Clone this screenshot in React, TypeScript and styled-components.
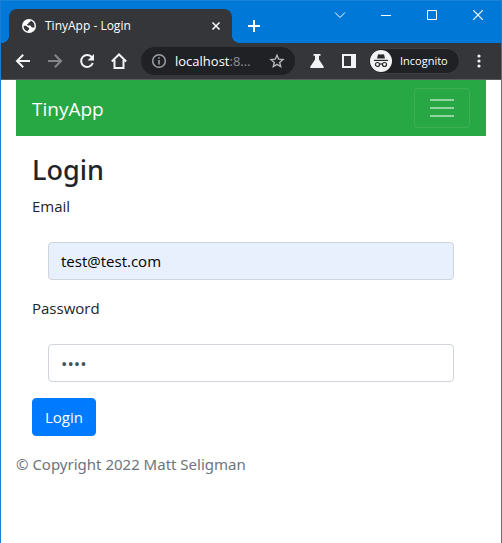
import React from "react";
import styled, { createGlobalStyle } from "styled-components";

const GlobalStyle = createGlobalStyle`
  *, *::before, *::after { box-sizing: border-box; }
  html, body, #root { height: 100%; }
  body {
    margin: 0;
    background: #fff;
    color: #212529;
    font: 15px/24px "Open Sans", "Noto Sans", sans-serif;
  }
  button, input { font: inherit; margin: 0; }
`;

const Window = styled.div`
  display: flex;
  flex-direction: column;
  min-height: 100%;
  border: solid #1a7fd4;
  border-width: 0 1px;
`;

const TabStrip = styled.header`
  display: flex;
  height: 43px;
  padding-left: 8px;
  background: #0078d7;
  border-top: 1px solid #1a83d8;
`;

const Tab = styled.div`
  position: relative;
  flex: 0 1 223px;
  display: flex;
  align-items: center;
  gap: 9px;
  margin-top: 8px;
  padding: 0 10px 0 13px;
  border-radius: 8px 8px 0 0;
  background: #35363a;
  color: #fff;
  font-size: 12px;
  line-height: 16px;

  &::before, &::after {
    content: "";
    position: absolute;
    bottom: 0;
    width: 8px;
    height: 8px;
  }
  &::before {
    right: 100%;
    background: radial-gradient(circle at 0 0, transparent 8px, #35363a 8px);
  }
  &::after {
    left: 100%;
    background: radial-gradient(circle at 100% 0, transparent 8px, #35363a 8px);
  }
`;

const TabTitle = styled.span`
  flex: 1;
  white-space: nowrap;
`;

const IconButton = styled.button<{ $width?: number; $color?: string }>`
  display: flex;
  flex: none;
  align-items: center;
  justify-content: center;
  width: ${(p) => p.$width ?? 32}px;
  height: 28px;
  padding: 0;
  border: 0;
  background: none;
  color: ${(p) => p.$color ?? "#f1f3f4"};
`;

const NewTab = styled(IconButton)`
  margin: 11px 0 0 8px;
`;

const WindowControls = styled.div`
  display: flex;
  margin-left: auto;
`;

const Toolbar = styled.div`
  display: flex;
  align-items: center;
  height: 37px;
  padding: 0 3px 0 6px;
  background: #35363a;
  border-bottom: 1px solid #5a5b5f;
  color: #f1f3f4;
  font-size: 12px;
  line-height: 16px;
`;

const AddressBar = styled.div`
  flex: 1;
  display: flex;
  align-items: center;
  gap: 8px;
  height: 28px;
  margin: 0 6px;
  padding: 0 2px 0 10px;
  border-radius: 14px;
  background: #202124;
  color: #9aa0a6;
`;

const Address = styled.span`
  flex: 1;
  color: #8d9196;
  font-size: 13px;
  white-space: nowrap;

  b { color: #fff; font-weight: 500; }
`;

const Incognito = styled.button`
  display: flex;
  flex: none;
  align-items: center;
  gap: 8px;
  width: 92px;
  height: 26px;
  margin-left: 3px;
  padding: 0 0 0 1px;
  border: 1px solid #3c3e42;
  border-radius: 13px;
  background: #202124;
  color: #fff;
  font-size: 11px;
  font-weight: 500;
`;

const Page = styled.div`
  flex: 1;
  padding: 0 15px;
  background: #fff;
`;

const Navbar = styled.nav`
  display: flex;
  align-items: center;
  justify-content: space-between;
  padding: 8px 16px;
  background: #28a745;
`;

const Brand = styled.a`
  padding-top: 2px;
  color: #fff;
  font-size: 19px;
  line-height: 30px;
  text-decoration: none;
`;

const Toggler = styled.button`
  display: flex;
  padding: 4px 12px;
  border: 1px solid rgba(255, 255, 255, 0.1);
  border-radius: 4px;
  background: none;
  color: rgba(255, 255, 255, 0.5);
`;

const Form = styled.form`
  padding: 16px;
`;

const Title = styled.h1`
  margin: 0 0 6px;
  font-family: "Noto Sans", sans-serif;
  font-size: 27px;
  font-weight: 500;
  line-height: 36px;
`;

const Field = styled.div`
  margin-bottom: 16px;
`;

const Label = styled.label`
  display: block;
  margin-bottom: 8px;
`;

const InputWrap = styled.div`
  padding: 16px 16px 0;
`;

const Input = styled.input<{ $filled?: boolean }>`
  display: block;
  width: 100%;
  height: 38px;
  padding: 6px 12px;
  border: 1px solid #ced4da;
  border-radius: 4px;
  background: ${(p) => (p.$filled ? "#e8f0fe" : "#fff")};
  color: ${(p) => (p.$filled ? "#000" : "#495057")};

  &[type="password"] { font-size: 17px; }
`;

const Submit = styled.button`
  display: block;
  height: 38px;
  padding: 0 12px;
  border: 1px solid #007bff;
  border-radius: 4px;
  background: #007bff;
  color: #fff;
`;

const Footer = styled.footer`
  color: #6c757d;
  font-family: "Noto Sans", sans-serif;
`;

const Svg = ({ size, box = size, children }: { size: number; box?: number; children: React.ReactNode }) => (
  <svg width={size} height={size} viewBox={`0 0 ${box} ${box}`} fill="none" stroke="currentColor" strokeWidth="2" aria-hidden="true">
    {children}
  </svg>
);

export default function App() {
  return (
    <Window>
      <GlobalStyle />
      <TabStrip>
        <Tab>
          <Svg size={14}>
            <circle cx="7" cy="7" r="7" fill="currentColor" stroke="none" />
            <path d="M8.500 1.500C8.800 3 7.500 3.200 6.600 3.600 7 5 5 4.800 5 5.800c0 1 2.200.5 3.200.8 1.100.4.7 1.900 2.300 1.900h1.900C13 5 11.400 2.400 8.500 1.500zM1.600 6.700C1.500 9.800 3.200 11.900 5.800 12.400c0-1 .3-1.400 1-1.700C7.600 10.200 7.200 8.500 6 8.300 5 8.100 4.800 6.900 3.800 6.700z" fill="#35363a" stroke="none" />
          </Svg>
          <TabTitle>TinyApp - Login</TabTitle>
          <IconButton $width={12} aria-label="Close tab">
            <Svg size={10}><path d="M1.500 1.500l7 7M8.500 1.500l-7 7" strokeWidth="1.700" /></Svg>
          </IconButton>
        </Tab>
        <NewTab $width={28} $color="#fff" aria-label="New tab">
          <Svg size={12}><path d="M6 0v12M0 6h12" /></Svg>
        </NewTab>
        <WindowControls>
          <IconButton $width={46} $color="#fff" aria-label="Search tabs">
            <Svg size={12}><path d="M1 3.500l5 5 5-5" strokeWidth="1" /></Svg>
          </IconButton>
          <IconButton $width={46} $color="#fff" aria-label="Minimize">
            <Svg size={10}><path d="M0 5.500h10" strokeWidth="1" /></Svg>
          </IconButton>
          <IconButton $width={46} $color="#fff" aria-label="Maximize">
            <Svg size={10}><path d="M.5.5h9v9h-9z" strokeWidth="1" /></Svg>
          </IconButton>
          <IconButton $width={46} $color="#fff" aria-label="Close window">
            <Svg size={10}><path d="M0 0l10 10M10 0L0 10" strokeWidth="1.200" /></Svg>
          </IconButton>
        </WindowControls>
      </TabStrip>

      <Toolbar>
        <IconButton aria-label="Back">
          <Svg size={16}><path d="M15 8H2.500M8.200 1.800L2 8l6.200 6.200" /></Svg>
        </IconButton>
        <IconButton $color="#85868a" aria-label="Forward">
          <Svg size={16}><path d="M1 8h12.500M7.800 1.800L14 8l-6.200 6.200" /></Svg>
        </IconButton>
        <IconButton aria-label="Reload">
          <Svg size={16}>
            <path d="M13 4.400A6 6 0 1 0 13.800 10" />
            <path d="M15 1v6.500H8.500z" fill="currentColor" stroke="none" />
          </Svg>
        </IconButton>
        <IconButton aria-label="Home">
          <Svg size={16}><path d="M.8 8.500L8 1.500l7.200 7M3.500 7v8h9V7" /></Svg>
        </IconButton>
        <AddressBar>
          <Svg size={16}>
            <circle cx="8" cy="8" r="6.300" strokeWidth="1.500" />
            <path d="M8 7v4.500M8 4.200v1.600" strokeWidth="1.600" />
          </Svg>
          <Address><b>localhost</b>:8...</Address>
          <IconButton $width={32} $color="#b4b7bb" aria-label="Bookmark this page">
            <Svg size={16}><path d="M8 2.200l1.700 4 4.300.4-3.300 2.800 1 4.200L8 11.400l-3.700 2.200 1-4.200L2 6.600l4.300-.4z" strokeWidth="1.400" /></Svg>
          </IconButton>
        </AddressBar>
        <IconButton aria-label="Experiments">
          <Svg size={16}><path d="M4.500 1h7v1.800H10v3.700l4.600 7c.5.900.1 1.500-.8 1.500H2.200c-.9 0-1.300-.6-.8-1.500l4.600-7V2.800H4.500z" fill="currentColor" stroke="none" /></Svg>
        </IconButton>
        <IconButton aria-label="Side panel">
          <Svg size={16}><path fill="currentColor" stroke="none" fillRule="evenodd" d="M1 1h14v14H1zM3 3v10h7V3z" /></Svg>
        </IconButton>
        <Incognito>
          <Svg size={22}>
            <circle cx="11" cy="11" r="11" fill="#f1f3f4" stroke="none" />
            <g stroke="#292a2d" strokeWidth="1.200">
              <path d="M7 8.500l1-4 2-.3 1 .5 1-.5 2 .3 1 4z" fill="#292a2d" stroke="none" />
              <path d="M4 10.400h14" />
              <circle cx="7.500" cy="14.500" r="2" />
              <circle cx="14.500" cy="14.500" r="2" />
              <path d="M9.500 14.200q1.500-.8 3 0" />
            </g>
          </Svg>
          Incognito
        </Incognito>
        <IconButton $width={38} aria-label="Browser menu">
          <Svg size={16}>
            <g fill="currentColor" stroke="none">
              <circle cx="8" cy="3" r="1.600" /><circle cx="8" cy="8" r="1.600" /><circle cx="8" cy="13" r="1.600" />
            </g>
          </Svg>
        </IconButton>
      </Toolbar>

      <Page>
        <Navbar>
          <Brand href="#">TinyApp</Brand>
          <Toggler type="button" aria-label="Toggle navigation">
            <Svg size={30}><path d="M3 7h24M3 15h24M3 23h24" /></Svg>
          </Toggler>
        </Navbar>
        <Form onSubmit={(e) => e.preventDefault()}>
          <Title>Login</Title>
          <Field>
            <Label htmlFor="email">Email</Label>
            <InputWrap><Input id="email" type="email" defaultValue="test@test.com" $filled /></InputWrap>
          </Field>
          <Field>
            <Label htmlFor="password">Password</Label>
            <InputWrap><Input id="password" type="password" defaultValue="pass" /></InputWrap>
          </Field>
          <Submit type="submit">Login</Submit>
        </Form>
        <Footer>© Copyright 2022 Matt Seligman</Footer>
      </Page>
    </Window>
  );
}
